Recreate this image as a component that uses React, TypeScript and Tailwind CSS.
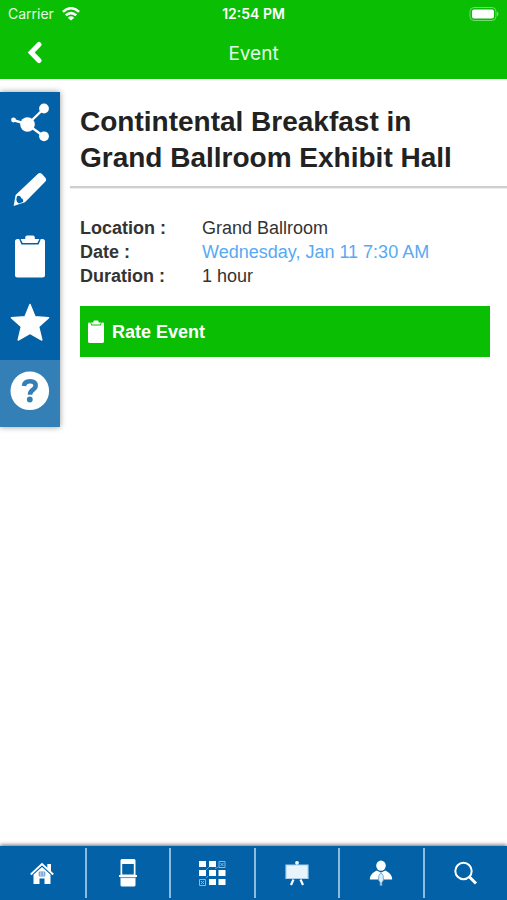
import { ReactNode } from "react";

const ShareIcon = () => (
  <svg viewBox="0 0 40 44" className="w-10 h-11" fill="currentColor">
    <path d="M3 19 17.5 23.5 34 7.5M17.5 23.5 34 35.5" fill="none" stroke="currentColor" strokeWidth="2.4" />
    <circle cx="17.5" cy="23.5" r="7.3" />
    <circle cx="34" cy="7.5" r="4.9" />
    <circle cx="34" cy="35.3" r="4.9" />
    <circle cx="3.5" cy="19" r="2.4" />
  </svg>
);

const PencilIcon = () => (
  <svg viewBox="0 0 40 44" className="w-10 h-11" fill="currentColor">
    <path d="M28 5.8Q30 4 32 6L35.6 10Q37 12 35.4 13.6L15 34.3 3.6 38 5.6 27Z" />
    <path d="M7 28.2 6.3 31.8Q6.6 34.6 9 35.4L13 34Q13.8 32 12.4 30.8 10.8 30.6 10.6 28.8 9.2 27 7 28.2Z" fill="#0361a8" />
  </svg>
);

const ClipboardIcon = ({ className }: { className: string }) => (
  <svg viewBox="5 0 30 44" className={className} fill="currentColor">
    <path d="M7.5 4H9.2L11.4 9.6H28.6L30.8 4H32.5Q35 4 35 6.5V40Q35 42.5 32.5 42.5H7.5Q5 42.5 5 40V6.5Q5 4 7.5 4Z" />
    <path d="M10.6 4H15.2V2.5Q15.2.5 17.2.5H22.8Q24.8.5 24.8 2.5V4H29.4L27.4 8H12.6Z" />
  </svg>
);

const StarIcon = () => (
  <svg viewBox="0 0 40 44" className="w-10 h-11" fill="currentColor" stroke="currentColor" strokeWidth="1.5" strokeLinejoin="round">
    <path d="M20 2.5 25 14.8 38.6 15.8 28.6 24.8 31.8 38 20 31.4 8.2 38 11.4 24.8 1.4 15.8 15 14.8Z" />
  </svg>
);

const HelpIcon = () => (
  <svg viewBox="0 0 40 44" className="w-10 h-11">
    <circle cx="19.8" cy="21.8" r="19.3" fill="white" />
    <path d="M14 17Q14.3 12.2 20 12.2 25.6 12.2 25.6 16.5 25.6 18.8 23.3 20.5 20 22.7 20 25.7" fill="none" stroke="#3480b6" strokeWidth="4.6" />
    <circle cx="19.8" cy="30.5" r="2.9" fill="#3480b6" />
  </svg>
);

const HomeIcon = () => (
  <svg viewBox="0 0 24 24" className="w-6 h-6" fill="currentColor">
    <path d="M3.5 13.5 12 6 20.5 13.5V23H14.5V17.5H9.5V23H3.5Z" />
    <path d="M17.3 3H21V11L17.3 8Z" />
    <path d="M.8 13.5 12 3 23.2 13.5" fill="none" stroke="currentColor" strokeWidth="2" />
    <path d="M3.2 13.2 12 5 20.8 13.2" fill="none" stroke="#0361a8" strokeWidth="0.5" />
    <path d="M9.2 11H14.8V15H9.2ZM12 11V15M9.2 13H14.8" fill="none" stroke="#3f87bf" strokeWidth="0.8" />
  </svg>
);

const BoothIcon = () => (
  <svg viewBox="0 0 20 28" className="w-5 h-7" fill="currentColor">
    <path d="M4 0H16Q17.5 0 17.5 1.5V16H19V18H17.5V26Q17.5 27.5 16 27.5H4Q2.5 27.5 2.5 26V18H1V16H2.5V1.5Q2.5 0 4 0Z" />
    <path d="M4.2 5H15.8V15.5H4.2Z" fill="#0361a8" />
    <path d="M2.5 18.6H17.5" stroke="#0361a8" strokeWidth="0.7" />
  </svg>
);

const GridIcon = () => (
  <svg viewBox="0 0 28 28" className="w-7 h-7" fill="currentColor">
    <path d="M1 2H8V8H1ZM11 2H18V8H11ZM1 11H8V17H1ZM11 11H18V17H11ZM20.5 11H27.5V17H20.5ZM11 20H18V26H11ZM20.5 20H27.5V26H20.5Z" />
    <g fill="none" stroke="#8bb9dc">
      <path d="M21 2.5H27V8.5H21ZM1.5 20.5H7.5V26.5H1.5Z" />
      <path d="M22.5 4 25.5 7M25.5 4 22.5 7M3 22 6 25M6 22 3 25" />
      <path d="M8 11 11 8M17 9.5 20.5 8M8 19 10 17" strokeWidth="0.7" />
    </g>
  </svg>
);

const BoardIcon = () => (
  <svg viewBox="0 0 24 26" className="w-6 h-6.5" fill="currentColor">
    <path d="M1 5H23V18.5H1Z" fill="#e8f4fc" stroke="#a9d0ed" strokeWidth="1.2" />
    <circle cx="12" cy="2.8" r="1.9" />
    <path d="M8.5 19.5 6 25M15.5 19.5 18 25" stroke="currentColor" strokeWidth="2.2" />
  </svg>
);

const SpeakerIcon = () => (
  <svg viewBox="0 0 24 28" className="w-6 h-7" fill="currentColor">
    <ellipse cx="12" cy="6.6" rx="4.8" ry="5.2" />
    <path d="M.8 20.5Q.5 15.5 7.5 11.5L12 13.5 16.5 11.5Q23.5 15.5 23.2 20.5Z" />
    <path d="M12 13.5Q15 16 14.5 21L12.9 23.5V26.5H11.1V23.5L9.5 21Q9 16 12 13.5Z" fill="#dceefa" stroke="#5d9ccb" strokeWidth="0.8" />
  </svg>
);

const SearchIcon = () => (
  <svg viewBox="0 0 24 24" className="w-6 h-6" fill="none" stroke="currentColor">
    <circle cx="9.5" cy="10" r="8.2" strokeWidth="2" />
    <path d="M15.5 16 22 22.5" strokeWidth="3" />
  </svg>
);

const actions: { label: string; icon: ReactNode; active?: boolean }[] = [
  { label: "Share", icon: <ShareIcon /> },
  { label: "Notes", icon: <PencilIcon /> },
  { label: "Survey", icon: <ClipboardIcon className="w-[30px] h-11" /> },
  { label: "Favorite", icon: <StarIcon /> },
  { label: "Help", icon: <HelpIcon />, active: true },
];

const tabs: { label: string; icon: ReactNode }[] = [
  { label: "Home", icon: <HomeIcon /> },
  { label: "Exhibitors", icon: <BoothIcon /> },
  { label: "Floor plan", icon: <GridIcon /> },
  { label: "Sessions", icon: <BoardIcon /> },
  { label: "Speakers", icon: <SpeakerIcon /> },
  { label: "Search", icon: <SearchIcon /> },
];

const StatusBar = () => (
  <div className="grid grid-cols-3 items-center h-7 px-2 text-sm font-['Inter','Liberation_Sans',sans-serif]">
    <div className="flex items-center gap-2 text-[#e4fbe3]">
      <span>Carrier</span>
      <svg viewBox="0 0 18 14" className="w-[18px] h-3.5" fill="none" stroke="white" strokeWidth="2.6">
        <path d="M.9 4.9Q9-2.4 17.1 4.9M3.8 8.3Q9 3.8 14.2 8.3" />
        <path d="M9 13.6 5.8 10.7Q9 8 12.2 10.7Z" fill="white" stroke="none" />
      </svg>
    </div>
    <div className="text-center font-semibold">12:54 PM</div>
    <svg viewBox="0 0 30 14" className="w-[30px] h-3.5 justify-self-end">
      <rect x="1" y=".5" width="26" height="13" rx="4" fill="none" stroke="#6fdc6b" />
      <rect x="3" y="2.5" width="22" height="9" rx="2" fill="white" />
      <path d="M28 4.5Q31 7 28 9.5Z" fill="#6fdc6b" />
    </svg>
  </div>
);

const App = () => {
  return (
    <div className="flex flex-col min-h-screen bg-white text-[#333] font-['Liberation_Sans',Arial,sans-serif]">
      <header className="bg-[#09be03] text-white">
        <StatusBar />
        <div className="grid grid-cols-3 items-center h-[51px] pb-0.5">
          <button aria-label="Back" className="w-8 h-8 ml-[19px] flex items-center justify-center">
            <svg viewBox="0 0 16 24" className="w-4 h-6" fill="none" stroke="currentColor" strokeWidth="5">
              <path d="M12 3.5 4.2 11.5 12 19.5" strokeLinecap="round" strokeLinejoin="miter" />
            </svg>
          </button>
          <h1 className="pt-1 text-center text-[19px] text-[#e4fbe3] font-['Inter','Liberation_Sans',sans-serif]">Event</h1>
        </div>
      </header>

      <main className="flex flex-1 items-start">
        <nav className="w-[60px] shrink-0 mt-[13px] bg-[#0361a8] text-white shadow-[0_0_6px_rgba(0,0,0,0.4)]">
          {actions.map((action) => (
            <button
              key={action.label}
              aria-label={action.label}
              className={`flex w-full h-[67px] pb-1.5 items-center justify-center ${action.active ? "bg-[#3480b6]" : ""}`}
            >
              {action.icon}
            </button>
          ))}
        </nav>

        <section className="flex-1 pl-2.5">
          <div className="pt-[25px] pb-2.5 pl-2.5 border-b-2 border-[#cfcfcf] shadow-[0_1px_0_#ededed]">
            <h2 className="max-w-[400px] text-[28px] leading-9 font-bold text-[#222]">
              Contintental Breakfast in Grand Ballroom Exhibit Hall
            </h2>
          </div>

          <div className="pt-7 pl-2.5 pr-[17px]">
            <dl className="grid grid-cols-[122px_1fr] text-lg leading-6">
              <dt className="font-bold">Location :</dt>
              <dd>Grand Ballroom</dd>
              <dt className="font-bold">Date :</dt>
              <dd className="text-[#58a9f4]">Wednesday, Jan 11 7:30 AM</dd>
              <dt className="font-bold">Duration :</dt>
              <dd>1 hour</dd>
            </dl>
            <button className="flex items-center gap-2 w-full h-[51px] mt-[18px] px-2 bg-[#09be03] text-white text-lg font-bold">
              <ClipboardIcon className="w-4 h-6" />
              Rate Event
            </button>
          </div>
        </section>
      </main>

      <footer className="grid grid-cols-6 h-[54px] py-0.5 bg-[#0361a8] text-white shadow-[0_-1px_4px_rgba(0,0,0,0.6)]">
        {tabs.map((tab) => (
          <a
            key={tab.label}
            href="#"
            aria-label={tab.label}
            className="flex items-center justify-center border-l-2 border-[#8bbce0] first:border-l-0"
          >
            {tab.icon}
          </a>
        ))}
      </footer>
    </div>
  );
};

export default App;
